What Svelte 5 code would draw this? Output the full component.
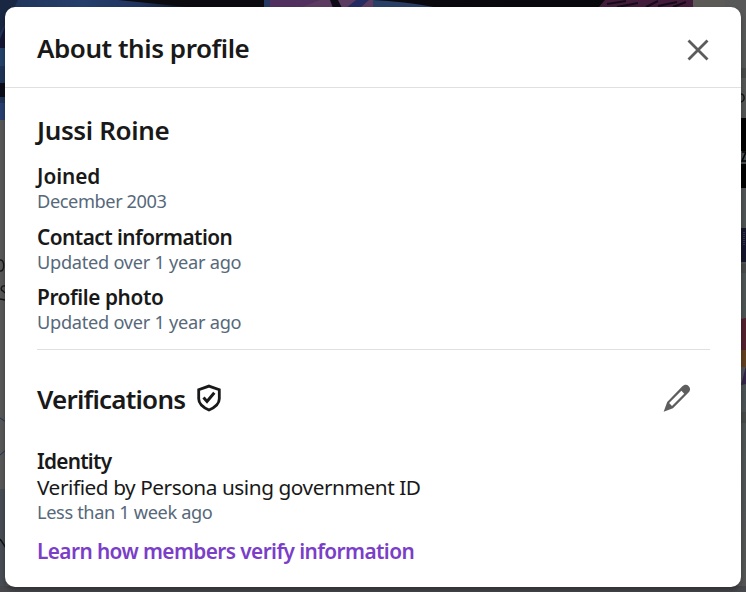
<script>
  const details = [
    { label: 'Joined', value: 'December 2003', l: -0.05, v: -0.4 },
    { label: 'Contact information', value: 'Updated over 1 year ago', l: -0.54, v: -0.27 },
    { label: 'Profile photo', value: 'Updated over 1 year ago', l: -0.41, v: -0.27 }
  ];
</script>

<div class="page">
  <svg class="backdrop" width="746" height="592" viewBox="0 0 746 592" aria-hidden="true">
    <defs>
      <linearGradient id="banner" gradientUnits="userSpaceOnUse" x1="0" y1="0" x2="693" y2="0">
        <stop offset="0" stop-color="#203457" /><stop offset=".12" stop-color="#253e6b" />
        <stop offset=".2" stop-color="#21345f" /><stop offset=".29" stop-color="#0b0b12" />
        <stop offset="1" stop-color="#09080b" />
      </linearGradient>
      <linearGradient id="side" x2="0" y2="1">
        <stop offset="0" stop-color="#585858" /><stop offset=".3" stop-color="#505454" />
        <stop offset=".65" stop-color="#4c5354" /><stop offset="1" stop-color="#555" />
      </linearGradient>
    </defs>
    <path fill="#585858" d="M0 0h746v592H0z" />
    <path fill="url(#banner)" d="M0 0h693v120H0z" />
    <path fill="#192743" d="M0 0h18L8 20 0 33z" />
    <path fill="#151735" d="M0 39 8 20v28H0z" />
    <path fill="#254269" d="M0 48h8v18H0z" />
    <path fill="#0b0e19" d="M0 83h8v14H0z" />
    <path fill="#293f70" d="M0 103h8v17H0z" />
    <path fill="#0b0b10" d="M118 0h146v8h-66z" />
    <path fill="#263864" d="M264 0h6v8h-6z" />
    <path fill="#51305f" d="M270 0h62v8h-62z" />
    <path fill="#5c3b60" d="M300 8 320 0h53v8z" />
    <path fill="#0d0c17" d="M330 0h8l4 8h-9z" />
    <path fill="#242b61" d="m346 8 10-8h13l-9 8z" />
    <path fill="#293f66" d="M373 0c20 1 40 3 66 8h-66z" />
    <path fill="#431c3b" d="m598 8 7-8h88v8z" />
    <path fill="none" stroke="#160a18" stroke-width="2" d="m607 4 19-3m-9 6 21-4m8 4 12-6m0 5 19-4m-4 5 13-5" />
    <path fill="#5b5a56" d="M693 0h32v8h-32z" />
    <path fill="url(#side)" d="M741 8h5v584h-5z" />
    <path fill="#484a4a" d="M741 68h5v10h-5zM741 264h5v9h-5zM741 412h5v11h-5z" />
    <path fill="#000" d="M741 118h5v70h-5z" />
    <path fill="#454d50" d="M741 151h5v13h-5z" />
    <path fill="none" stroke="#000" stroke-width="1.5" d="M742 152h4l-4 9h4" />
    <path fill="none" stroke="#161818" stroke-width="1.5" d="M740 94c5-1 6 8 0 8" />
    <path fill="#15162a" d="M741 228h5v34h-5z" />
    <path stroke="#545568" stroke-dasharray="1 1" d="M744 232v14" />
    <path fill="#52202e" d="M741 319l5-1v32h-5z" />
    <path fill="#60401f" d="M741 350h5v17h-5z" />
    <path fill="#342448" d="m741 385 5-19v18z" />
    <path fill="#484d55" d="M0 489h6v103H0z" />
    <path fill="#47484c" d="M0 586h746v6H0z" />
    <path fill="none" stroke="#171718" stroke-width="1.4" d="M0 260c5-1 5 12 0 11M5 286c-4-1-5 4-2 5l2 2M0 299l5 1" />
    <path fill="none" stroke="#1c355b" d="m0 418 6 4m-6 33 6-5" />
    <path fill="none" stroke="#111316" stroke-width="1.5" d="m0 539 6 9" />
  </svg>

  <section class="modal" role="dialog" aria-labelledby="title">
    <header>
      <h1 id="title">About this profile</h1>
      <button aria-label="Close">
        <svg width="24" height="24" viewBox="0 0 24 24"><path class="line" d="m2.5 2.5 19 19m0-19-19 19" stroke-width="2.8" /></svg>
      </button>
    </header>
    <div class="body">
      <h2 class="name">Jussi Roine</h2>
      <dl>
        {#each details as d}
          <div class="detail">
            <dt style:letter-spacing="{d.l}px">{d.label}</dt>
            <dd style:letter-spacing="{d.v}px">{d.value}</dd>
          </div>
        {/each}
      </dl>
      <div class="section-head">
        <h2 class="verifications">Verifications</h2>
        <svg class="shield" width="26" height="30" viewBox="0 0 26 30">
          <path d="M13 3.1 23.300 6.800v8.900c0 5.200-4.300 8.600-10.300 11.300C7 24.300 2.700 20.900 2.700 15.700V6.800z" />
          <path d="m7.500 14.500 3.500 4 7.300-8.800" stroke-width="3" />
        </svg>
        <button class="edit" aria-label="Edit">
          <svg width="32" height="32" viewBox="0 0 30 30">
            <path fill="#5e5e5e" fill-rule="evenodd" d="M2.500 28 5.800 18.800 19.800 4.300c2.100-2.100 4.400-2.200 6.200-.4s1.700 4.100-.4 6.200L11.200 24.600zM7.600 19.700 19.100 8.200l2.700 2.700L10.300 22.400z" />
          </svg>
        </button>
      </div>
      <h3>Identity</h3>
      <p class="method">Verified by Persona using government ID</p>
      <p class="when">Less than 1 week ago</p>
      <a href="#learn">Learn how members verify information</a>
    </div>
  </section>
</div>

<style>
  :global(body) { margin: 0; overflow: hidden; }
  .page { position: relative; box-sizing: border-box; width: 746px; height: 592px; padding: 7px 5px 5px; font-family: "Noto Sans", "Open Sans", sans-serif; color: #191919; overflow: hidden; }
  .backdrop { position: absolute; left: 0; top: 0; }
  .modal { position: relative; box-sizing: border-box; width: 736px; height: 580px; background: #fff; border-radius: 10px; box-shadow: 0 3px 5px #0005; }
  header { box-sizing: border-box; height: 81px; padding: 2px 31px 0 32px; border-bottom: 1px solid #e0e0e0; display: flex; align-items: center; justify-content: space-between; }
  h1, h2, h3, p, dl, dt, dd { margin: 0; white-space: nowrap; }
  h1, h2 { font-size: 26px; line-height: 32px; font-weight: 600; letter-spacing: -.45px; }
  .name { letter-spacing: -.37px; }
  .verifications { letter-spacing: -.78px; }
  button { display: flex; padding: 0; border: 0; background: none; }
  header button { padding-top: 3px; }
  .line { fill: none; stroke: #5c5c5c; }
  .body { padding: 26px 31px 0 32px; }
  dl { display: grid; grid-auto-rows: 50px; row-gap: 10.500px; margin-top: 17px; padding-bottom: 15px; border-bottom: 1px solid #e0e0e0; }
  dt, h3 { font-size: 20.800px; line-height: 26px; font-weight: 600; }
  .detail:nth-child(2) dt { line-height: 27px; }
  .detail:nth-child(2) dd { line-height: 22px; }
  dd, .when { font-size: 18.200px; line-height: 24px; color: #56687a; }
  .section-head { display: flex; align-items: center; margin-top: 31px; height: 36px; }
  .shield { margin: -3px 0 0 11px; fill: none; stroke: #191919; stroke-width: 2.800; }
  .edit { margin: -2px 17px 0 auto; }
  h3 { margin-top: 31px; letter-spacing: -.75px; }
  .method { font-size: 20.800px; line-height: 26px; letter-spacing: -.45px; }
  .when { letter-spacing: -.36px; }
  a { display: block; margin-top: 14px; font-size: 20.800px; line-height: 26px; font-weight: 600; color: #7a3ec8; text-decoration: none; white-space: nowrap; letter-spacing: -.58px; }
</style>
